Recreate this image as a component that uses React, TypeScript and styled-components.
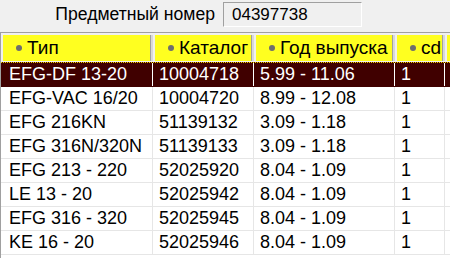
import * as React from 'react';
import styled, { createGlobalStyle } from 'styled-components';

const GlobalStyle = createGlobalStyle`
  html, body {
    margin: 0;
    padding: 0;
    background: #f0f0f0;
    font-family: "Liberation Sans", Arial, sans-serif;
  }
`;

const Window = styled.div`
  width: 450px;
  height: 258px;
  overflow: hidden;
  background: #f0f0f0;
  display: flex;
  flex-direction: column;
`;

const SearchBar = styled.div`
  height: 32px;
  display: flex;
  align-items: flex-start;
  padding-top: 2px;
  box-sizing: border-box;
`;

const Label = styled.span`
  width: 223px;
  text-align: right;
  font-size: 17.6px;
  line-height: 24px;
  color: #000;
  padding-right: 8px;
  box-sizing: border-box;
`;

const NumberBox = styled.div`
  width: 139px;
  height: 25px;
  box-sizing: border-box;
  border: 1px solid #a0a0a0;
  border-right-color: #ffffff;
  border-bottom-color: #ffffff;
  background: #f0f0f0;
  font-size: 17px;
  line-height: 23px;
  padding-left: 8px;
  color: #000;
`;

const cols = '152px 101px 141px 50px 1fr';

const Grid = styled.div`
  flex: 1;
  border-top: 1px solid #a0a0a0;
  border-left: 1px solid #a0a0a0;
  background: #fff;
  box-shadow: inset 1px 1px 0 #fff;
`;

const HeaderRow = styled.div`
  display: grid;
  grid-template-columns: ${cols};
  height: 29px;
  background: #f0f0f0;
  padding-top: 1px;
  box-sizing: border-box;
`;

const HeaderCell = styled.div`
  margin: 1px 2px 1px 2px;
  background: #ffff20;
  border-right: 1px solid #a0a0a0;
  box-shadow: 2px 0 0 #d8d8d8;
  display: flex;
  align-items: center;
  font-size: 19px;
  color: #000;
  padding-left: 13px;
  gap: 5px;
  white-space: nowrap;
  overflow: hidden;
`;

const Dot = styled.span`
  width: 6px;
  height: 6px;
  border-radius: 50%;
  background: #6e6e6e;
  flex: none;
`;

const Row = styled.div<{ $selected?: boolean }>`
  display: grid;
  grid-template-columns: ${cols};
  height: 24px;
  box-sizing: border-box;
  background: ${(p) => (p.$selected ? '#400000' : '#fff')};
  color: ${(p) => (p.$selected ? '#fff' : '#000')};
  border-bottom: 1px solid ${(p) => (p.$selected ? '#400000' : '#e6e6e6')};
  ${(p) => (p.$selected ? `border-top: 1px dotted #f0d000; height: 25px;` : '')}
`;

const Cell = styled.div<{ $selected?: boolean; $first?: boolean }>`
  border-right: 1px solid ${(p) => (p.$selected ? '#ffffff' : '#e6e6e6')};
  font-size: 18px;
  line-height: 23px;
  padding-left: ${(p) => (p.$first ? 8 : 6)}px;
  white-space: nowrap;
  overflow: hidden;
`;

const headers = ['Тип', 'Каталог', 'Год выпуска', 'cd', ''];

const rows = [
  ['EFG-DF 13-20', '10004718', '5.99 - 11.06', '1'],
  ['EFG-VAC 16/20', '10004720', '8.99 - 12.08', '1'],
  ['EFG 216KN', '51139132', '3.09 - 1.18', '1'],
  ['EFG 316N/320N', '51139133', '3.09 - 1.18', '1'],
  ['EFG 213 - 220', '52025920', '8.04 - 1.09', '1'],
  ['LE 13 - 20', '52025942', '8.04 - 1.09', '1'],
  ['EFG 316 - 320', '52025945', '8.04 - 1.09', '1'],
  ['KE 16 - 20', '52025946', '8.04 - 1.09', '1'],
];

export default function App() {
  return (
    <>
      <GlobalStyle />
      <Window>
        <SearchBar>
          <Label>Предметный номер</Label>
          <NumberBox>04397738</NumberBox>
        </SearchBar>
        <Grid>
          <HeaderRow>
            {headers.map((h, i) => (
              <HeaderCell key={i}>
                {h && <Dot />}
                {h}
              </HeaderCell>
            ))}
          </HeaderRow>
          {rows.map((r, i) => (
            <Row key={i} $selected={i === 0}>
              {r.map((c, j) => (
                <Cell key={j} $selected={i === 0} $first={j === 0}>
                  {c}
                </Cell>
              ))}
              <Cell $selected={i === 0} />
            </Row>
          ))}
        </Grid>
      </Window>
    </>
  );
}
